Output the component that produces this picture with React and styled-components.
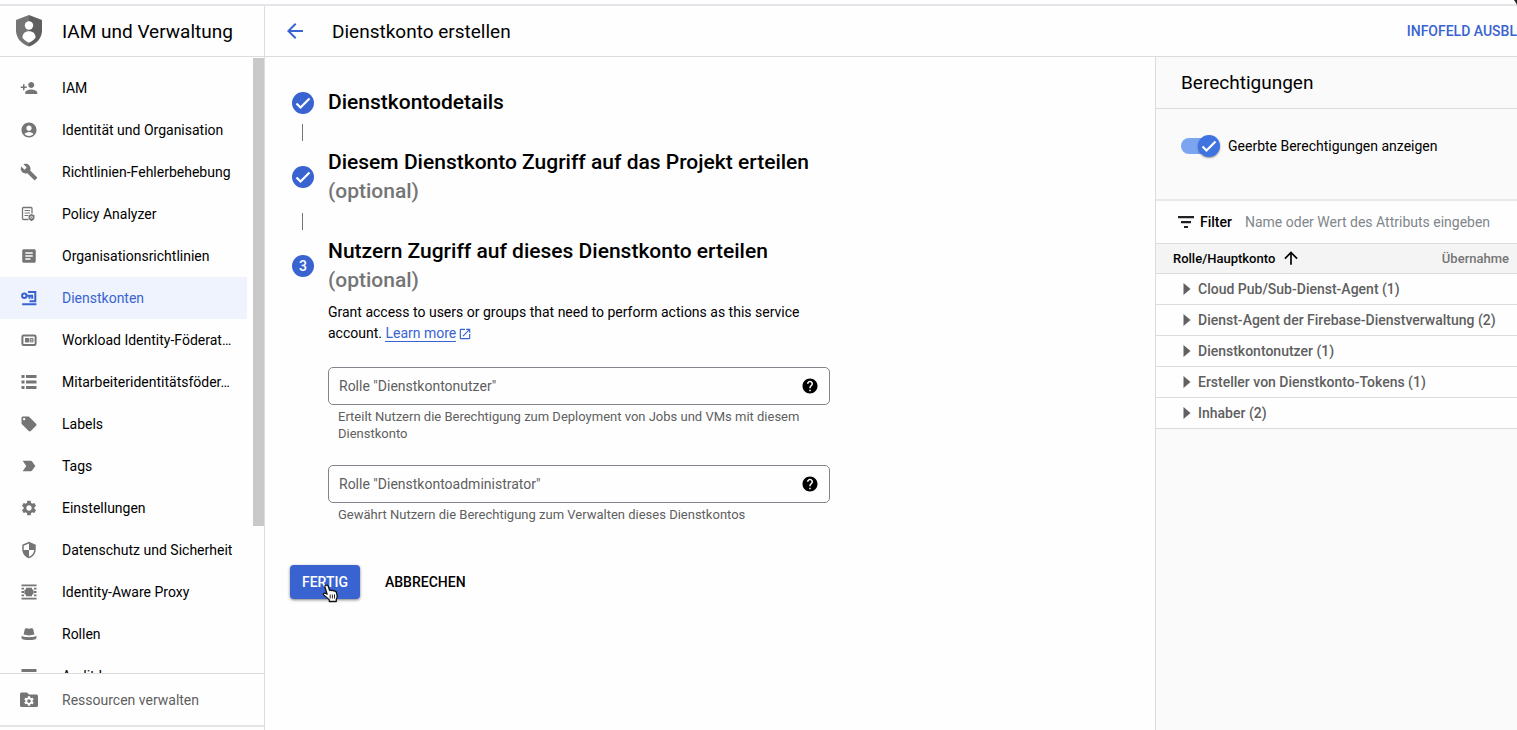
import React, { useState } from 'react'
import styled, { createGlobalStyle, css } from 'styled-components';
import {
  MdPersonAdd, MdAccountCircle, MdBuild, MdArticle, MdLocalOffer, MdLabelImportant,
  MdSettings, MdSecurity, MdArrowBack, MdArrowUpward, MdOpenInNew, MdHelp,
} from 'react-icons/md';

const BLUE = '#3963d1';
const LINE = '#dcdcde';
const GREY = '#757575';

const PolicyIcon = () => (
  <svg viewBox="0 0 18 18" fill="none" stroke="currentColor">
    <path d="M8.5 14.5H3.5a1 1 0 0 1-1-1V3.5a1 1 0 0 1 1-1H11a1 1 0 0 1 1 1V8.5" strokeWidth="1.3" />
    <path d="M4.5 5.5h5.5M4.5 8h5.5M4.5 10.5h3.5" />
    <path d="M11.5 9l3 1.2v2.4c0 1.8-1.3 3-3 3.6-1.7-.6-3-1.8-3-3.6v-2.4z" fill="currentColor" stroke="none" />
    <circle cx="11.5" cy="12.3" r="1" stroke="#fff" strokeWidth=".8" />
  </svg>
);

const ServiceAccountIcon = () => (
  <svg viewBox="0 0 18 18" fill="none" stroke="currentColor" strokeWidth="2">
    <circle cx="4.3" cy="6.7" r="2.2" />
    <path d="M6.5 6.7H13M9.5 6.7v3M12.2 6.7v3" />
    <path d="M8 3h7.3v9.3H9.5M2.2 15.2h14.2" />
  </svg>
);

const WorkloadIcon = () => (
  <svg viewBox="0 0 18 18" fill="none" stroke="currentColor">
    <rect x="2.4" y="4.4" width="13.2" height="9.6" rx="1.2" strokeWidth="2" />
    <path d="M5 7h4.2v4.4H5z" fill="currentColor" stroke="none" />
    <path d="M10.2 7.5h2.8v3.4h-2.8zM10 9.2h3" strokeWidth="1" />
  </svg>
);

const ListIcon = () => (
  <svg viewBox="0 0 18 18" fill="currentColor">
    <path d="M1.5 2h3v3h-3zM6 2h10.5v3H6zM1.5 7.5h3v3h-3zM6 7.5h10.5v3H6zM1.5 13h3v3h-3zM6 13h10.5v3H6z" />
  </svg>
);

const ProxyIcon = () => (
  <svg viewBox="0 0 18 18" fill="currentColor">
    <path d="M1.5 1.5h15v1.8h-15zM1.5 14.7h15v1.8h-15zM6 4.8h6v8.4H6zM4.5 6.5h9v5h-9z" />
    <path d="M1.5 4.7H4v1.7H1.5zM14 4.7h2.5v1.7H14zM1.5 8.1h2.8v1.8H1.5zM13.7 8.1h2.8v1.8h-2.8zM1.5 11.6H4v1.7H1.5zM14 11.6h2.5v1.7H14z" />
  </svg>
);

const HatIcon = () => (
  <svg viewBox="0 0 18 18" fill="currentColor">
    <path d="M3.6 9.6L4.7 4.6C5.1 3 6.8 2.8 9 3.7c2.2-.9 3.9-.7 4.3.9l1.1 5c-3.2 1.1-7.6 1.1-10.8 0z" />
    <path d="M1.5 11c4.5 1.6 10.5 1.6 15 0v1.5c0 1-.8 1.8-1.8 2-3.8.7-7.6.7-11.4 0-1-.2-1.8-1-1.8-2z" />
  </svg>
);

const LogsIcon = () => (
  <svg viewBox="0 0 18 18" fill="currentColor">
    <path d="M1.5 2h15v3h-15zM1.5 7h15v2h-15zM1.5 11h15v2h-15z" />
  </svg>
);

const FolderIcon = () => (
  <svg width="18" height="18" viewBox="0 0 18 18">
    <path fill={GREY} d="M1.5 1.5H7l2 2h7.5A1.5 1.5 0 0 1 18 5v9.5a1.5 1.5 0 0 1-1.5 1.5h-15A1.5 1.5 0 0 1 0 14.5V3a1.5 1.5 0 0 1 1.5-1.5z" />
    <MdSettings x="3" y="4" size={12} color="#fff" />
  </svg>
);

const ShieldLogo = () => (
  <svg width="26" height="32" viewBox="0 0 26 32">
    <path fill="#757575" d="M13 0L0 5v10.5C0 23 5.5 29 13 31.5z" />
    <path fill="#5f5f5f" d="M13 0l13 5v10.5C26 23 20.5 29 13 31.5z" />
    <circle cx="13" cy="10.5" r="4.2" fill="#fff" />
    <path fill="#fff" d="M6.5 22.5c0-4.2 2.7-6.3 6.5-6.3s6.5 2.1 6.5 6.3C18 25 15.8 26.6 13 27.7c-2.8-1.1-5-2.7-6.5-5.2z" />
  </svg>
);

const Check = () => (
  <svg width="16" height="16" viewBox="0 0 16 16" fill="none" stroke="#fff" strokeWidth="2.2">
    <path d="M1.5 8.5l4 4 9-9" />
  </svg>
);

const FilterIcon = () => (
  <svg width="16" height="12" viewBox="0 0 16 12" fill="#202124">
    <path d="M0 0h16v2.200H0zM3 5h10v2.200H3zM6 10h4v2H6z" />
  </svg>
);

const Triangle = () => (
  <svg width="8" height="12" viewBox="0 0 8 12"><path d="M.5 0l7 6-7 6z" fill="#616161" /></svg>
);

const HandCursor = () => (
  <Cursor width="17" height="19" viewBox="0 0 17 19" aria-hidden="true">
    <path
      d="M4 1.2c1-.4 1.9.1 2.2 1l1.5 4.3c.7-.7 1.7-.6 2.2.2.8-.6 1.8-.3 2.2.5.9-.4 1.9 0 2.2 1l.8 3.2c.3 1.5-.2 2.8-.8 4v2.1H7.3v-1.6C5.5 14.2 4 12.5 2 11.2c-1.4-1 0-2.7 1.6-1.9l1.5.9L2.900 3c-.2-.8.2-1.5 1.1-1.8z"
      fill="#fff" stroke="#111" strokeWidth="1.3" strokeLinejoin="round"
    />
    <path d="M8.2 10.5v4M10.4 10.5v4M12.5 10.5v4" stroke="#111" strokeWidth=".9" />
  </Cursor>
);

const navItems = [
  { label: 'IAM', icon: MdPersonAdd },
  { label: 'Identität und Organisation', icon: MdAccountCircle },
  { label: 'Richtlinien-Fehlerbehebung', icon: MdBuild },
  { label: 'Policy Analyzer', icon: PolicyIcon },
  { label: 'Organisationsrichtlinien', icon: MdArticle },
  { label: 'Dienstkonten', icon: ServiceAccountIcon },
  { label: 'Workload Identity-Föderat…', icon: WorkloadIcon },
  { label: 'Mitarbeiteridentitätsföder…', icon: ListIcon },
  { label: 'Labels', icon: MdLocalOffer },
  { label: 'Tags', icon: MdLabelImportant },
  { label: 'Einstellungen', icon: MdSettings },
  { label: 'Datenschutz und Sicherheit', icon: MdSecurity },
  { label: 'Identity-Aware Proxy', icon: ProxyIcon },
  { label: 'Rollen', icon: HatIcon },
  { label: 'Audit-Logs', icon: LogsIcon },
];

const roles = [
  'Cloud Pub/Sub-Dienst-Agent (1)',
  'Dienst-Agent der Firebase-Dienstverwaltung (2)',
  'Dienstkontonutzer (1)',
  'Ersteller von Dienstkonto-Tokens (1)',
  'Inhaber (2)',
];

const RoleField = ({ id, label, hint }) => {
  const [value, setValue] = useState('');
  return (
    <Field>
      <FieldBox>
        <FieldInput
          type='text'
          id={id}
          aria-label={label}
          aria-describedby={`${id}-hint`}
          placeholder={label}
          value={value}
          onChange={e => setValue(e.target.value)}
        />
        <HelpButton type='button' aria-label='Hilfe'><MdHelp size={18} /></HelpButton>
      </FieldBox>
      <Hint id={`${id}-hint`}>{hint}</Hint>
    </Field>
  );
};

export default function App() {
  const [inherited, setInherited] = useState(true);
  const [filter, setFilter] = useState('');

  return (
    <>
      <GlobalStyle />
      <Page>
        <TopStrip>
          <svg width="3" height="5" viewBox="0 0 3 5"><path d="M0 0h3v5L2 3z" fill="#222" /></svg>
        </TopStrip>
        <Shell>
          <Sidebar>
            <SidebarHeader>
              <ShieldLogo />
              <Title>IAM und Verwaltung</Title>
            </SidebarHeader>
            <NavScroll>
              <NavList>
                {navItems.map(({ label, icon: Icon }) => (
                  <li key={label}>
                    <NavLink href="#" $active={label === 'Dienstkonten'}>
                      <Icon />
                      {label}
                    </NavLink>
                  </li>
                ))}
              </NavList>
              <ScrollThumb />
            </NavScroll>
            <ResourceLink href="#">
              <FolderIcon />
              Ressourcen verwalten
            </ResourceLink>
            <SidebarEnd />
          </Sidebar>

          <Workspace>
            <Toolbar>
              <BackButton type='button' aria-label='Zurück'><MdArrowBack size={24} /></BackButton>
              <Title>Dienstkonto erstellen</Title>
              <InfoButton type='button'>INFOFELD AUSBL</InfoButton>
            </Toolbar>
            <Columns>
              <Main>
                <Step>
                  <Badge><Check /></Badge>
                  <StepTitle>Dienstkontodetails</StepTitle>
                </Step>
                <Connector />
                <Step>
                  <Badge><Check /></Badge>
                  <StepTitle>
                    Diesem Dienstkonto Zugriff auf das Projekt erteilen
                    <Optional>(optional)</Optional>
                  </StepTitle>
                </Step>
                <Connector />
                <Step>
                  <Badge>3</Badge>
                  <StepTitle>
                    Nutzern Zugriff auf dieses Dienstkonto erteilen
                    <Optional>(optional)</Optional>
                  </StepTitle>
                </Step>
                <StepBody>
                  <Description>
                    Grant access to users or groups that need to perform actions as this service
                    account. <LearnMore href="#">Learn more</LearnMore><MdOpenInNew size={14} color={BLUE} />
                  </Description>
                  <RoleField
                    id='rolle-nutzer'
                    label='Rolle "Dienstkontonutzer"'
                    hint='Erteilt Nutzern die Berechtigung zum Deployment von Jobs und VMs mit diesem Dienstkonto'
                  />
                  <RoleField
                    id='rolle-admin'
                    label='Rolle "Dienstkontoadministrator"'
                    hint='Gewährt Nutzern die Berechtigung zum Verwalten dieses Dienstkontos'
                  />
                </StepBody>
                <Actions>
                  <ActionButton type='button' $primary>FERTIG<HandCursor /></ActionButton>
                  <ActionButton type='button'>ABBRECHEN</ActionButton>
                </Actions>
              </Main>

              <InfoPanel>
                <PanelHeader><Title as='h2'>Berechtigungen</Title></PanelHeader>
                <SwitchRow>
                  <Switch>
                    <input
                      type='checkbox'
                      id='inherited'
                      checked={inherited}
                      onChange={e => setInherited(e.target.checked)}
                    />
                    <Knob $on={inherited}><Check /></Knob>
                  </Switch>
                  <label htmlFor='inherited'>Geerbte Berechtigungen anzeigen</label>
                </SwitchRow>
                <FilterRow>
                  <FilterIcon />
                  <label htmlFor='filter'>Filter</label>
                  <FilterInput
                    type='text'
                    id='filter'
                    placeholder='Name oder Wert des Attributs eingeben'
                    value={filter}
                    onChange={e => setFilter(e.target.value)}
                  />
                </FilterRow>
                <RoleTable>
                  <thead>
                    <tr>
                      <th><HeadCell>Rolle/Hauptkonto <MdArrowUpward size={20} /></HeadCell></th>
                      <th>Übernahme</th>
                    </tr>
                  </thead>
                  <tbody>
                    {roles.map(role => (
                      <tr key={role}>
                        <td colSpan={2}><RoleCell><Triangle />{role}</RoleCell></td>
                      </tr>
                    ))}
                  </tbody>
                </RoleTable>
              </InfoPanel>
            </Columns>
          </Workspace>
        </Shell>
      </Page>
    </>
  )
}

const GlobalStyle = createGlobalStyle`
  * {
    box-sizing: border-box;
  }

  body {
    margin: 0;
    background: #fefefe;
    color: #000;
    font-family: Roboto, "Liberation Sans", sans-serif;
    font-size: 14px;
    overflow: hidden;
  }

  button, input {
    font: inherit;
    color: inherit;
    border: none;
    background: none;
    padding: 0;
  }

  button {
    cursor: pointer;
  }

  svg {
    flex-shrink: 0;
  }
`;

const Page = styled.div`
  display: flex;
  flex-direction: column;
  height: 100vh;
`;

const TopStrip = styled.div`
  display: flex;
  justify-content: flex-end;
  height: 6px;
  border-bottom: 2px solid #e4e4e9;
`;

const Shell = styled.div`
  display: flex;
  flex: 1;
  min-height: 0;
`;

const Sidebar = styled.nav`
  display: flex;
  flex-direction: column;
  width: 265px;
  border-right: 1px solid ${LINE};
`;

const headerBar = css`
  display: flex;
  align-items: center;
  flex-shrink: 0;
  height: 51px;
  border-bottom: 1px solid ${LINE};
`;

const SidebarHeader = styled.div`
  ${headerBar}
  gap: 20px;
  padding-left: 16px;
`;

const Title = styled.h1`
  margin: 0;
  font-size: 19px;
  font-weight: 400;
`;

const NavScroll = styled.div`
  display: flex;
  flex: 1;
  gap: 6px;
  min-height: 0;
  overflow: hidden;
`;

const NavList = styled.ul`
  flex: 1;
  margin: 0;
  padding: 10px 0 0;
  list-style: none;
`;

const NavLink = styled.a`
  display: flex;
  align-items: center;
  gap: 24px;
  height: 42px;
  padding-left: 20px;
  white-space: nowrap;
  text-decoration: none;
  color: ${props => (props.$active ? BLUE : '#000')};
  background: ${props => (props.$active ? '#eef3fd' : 'transparent')};

  svg {
    width: 18px;
    height: 18px;
    color: ${props => (props.$active ? BLUE : GREY)};
  }
`;

const ScrollThumb = styled.div`
  width: 11px;
  height: 76%;
  margin-top: 1px;
  background: #c9c9c9;
`;

const ResourceLink = styled.a`
  display: flex;
  align-items: center;
  gap: 24px;
  height: 52px;
  padding-left: 20px;
  border-top: 1px solid ${LINE};
  color: #5f5f5f;
  text-decoration: none;
`;

const SidebarEnd = styled.div`
  height: 5px;
  border-top: 2px solid #e4e4e6;
`;

const Workspace = styled.div`
  display: flex;
  flex: 1;
  flex-direction: column;
  min-width: 0;
`;

const Toolbar = styled.header`
  ${headerBar}
  gap: 25px;
  padding-left: 18px;
`;

const BackButton = styled.button`
  display: flex;
  color: ${BLUE};
`;

const InfoButton = styled.button`
  margin-left: auto;
  color: ${BLUE};
  font-weight: 500;
  white-space: nowrap;
`;

const Columns = styled.div`
  display: flex;
  flex: 1;
  min-height: 0;
`;

const Main = styled.main`
  flex: 1;
  padding: 31px 25px;
`;

const Step = styled.div`
  display: flex;
  align-items: center;
  gap: 14px;
  padding-left: 2px;
`;

const Badge = styled.span`
  display: flex;
  align-items: center;
  justify-content: center;
  width: 22px;
  height: 22px;
  border-radius: 50%;
  background: ${BLUE};
  color: #fff;
  font-weight: 500;
`;

const StepTitle = styled.h2`
  margin: 0;
  font-size: 21px;
  font-weight: 500;
  line-height: 29px;
`;

const Optional = styled.span`
  display: block;
  color: #757575;
`;

const Connector = styled.div`
  width: 1px;
  height: 17px;
  margin: 7px 12px;
  background: #757575;
`;

const StepBody = styled.div`
  max-width: 540px;
  padding-left: 38px;
`;

const Description = styled.p`
  margin: 7px 0 0;
  padding-right: 20px;
  line-height: 21px;

  svg {
    margin-left: 2px;
    vertical-align: middle;
  }
`;

const LearnMore = styled.a`
  color: ${BLUE};
  text-decoration: none;
  border-bottom: 1px solid ${BLUE};
`;

const Field = styled.div`
  margin-top: 23px;
`;

const FieldBox = styled.div`
  display: flex;
  align-items: center;
  height: 38px;
  padding: 0 10px;
  border: 1px solid #80868b;
  border-radius: 5px;
`;

const FieldInput = styled.input`
  flex: 1;
  outline: none;

  &::placeholder {
    color: #5f5f5f;
    opacity: 1;
  }
`;

const HelpButton = styled.button`
  display: flex;
`;

const Hint = styled.p`
  margin: 3px 10px 0;
  color: #5f5f5f;
  font-size: 13px;
  line-height: 17px;
`;

const Actions = styled.div`
  display: flex;
  gap: 13px;
  margin-top: 42px;
`;

const ActionButton = styled.button`
  position: relative;
  height: 34px;
  padding: 0 12px;
  border-radius: 4px;
  font-weight: 500;
  color: ${props => (props.$primary ? '#fff' : '#000')};
  background: ${props => (props.$primary ? BLUE : 'transparent')};
  box-shadow: ${props => (props.$primary ? '0 1px 3px rgba(0, 0, 0, 0.5)' : 'none')};
`;

const Cursor = styled.svg`
  position: absolute;
  left: 32px;
  top: 19px;
`;

const InfoPanel = styled.aside`
  width: 362px;
  border-left: 1px solid ${LINE};
  background: #fafafa;
`;

const PanelHeader = styled.div`
  display: flex;
  align-items: center;
  height: 52px;
  padding-left: 25px;
  border-bottom: 1px solid ${LINE};
`;

const SwitchRow = styled.div`
  display: flex;
  align-items: center;
  gap: 8px;
  height: 92px;
  padding: 0 25px 16px;
  border-bottom: 2px solid #e8e8e8;
`;

const Switch = styled.span`
  position: relative;
  display: flex;
  width: 39px;

  input {
    appearance: none;
    width: 36px;
    height: 16px;
    margin: 0;
    border-radius: 8px;
    background: #7ba4f1;
    cursor: pointer;
  }
`;

const Knob = styled.span`
  position: absolute;
  top: -3px;
  right: ${props => (props.$on ? '0' : '18px')};
  display: flex;
  align-items: center;
  justify-content: center;
  width: 22px;
  height: 22px;
  border-radius: 50%;
  background: #3f74e0;
  color: #fff;
  box-shadow: 0 1px 2px rgba(0, 0, 0, 0.4);
  pointer-events: none;
`;

const FilterRow = styled.div`
  display: flex;
  align-items: center;
  height: 43px;
  padding-left: 22px;
  border-bottom: 1px solid ${LINE};
  background: #fefefe;

  label {
    margin: 0 13px 0 6px;
    font-weight: 500;
  }
`;

const FilterInput = styled.input`
  flex: 1;
  outline: none;

  &::placeholder {
    color: #80868b;
    opacity: 1;
  }
`;

const RoleTable = styled.table`
  width: 100%;
  border-collapse: collapse;
  background: #fefefe;

  tr {
    height: 31px;
    border-bottom: 1px solid ${LINE};
  }

  thead tr {
    height: 29px;
    background: #f4f4f4;
  }

  th {
    padding: 0 8px 0 17px;
    font-size: 13px;
    font-weight: 500;
    text-align: left;
  }

  th:last-child {
    color: #757575;
    text-align: right;
  }

  td {
    padding: 0 0 0 27px;
    color: #5f5f5f;
    font-weight: 500;
  }
`;

const HeadCell = styled.span`
  display: flex;
  align-items: center;
  gap: 6px;
`;

const RoleCell = styled.span`
  display: flex;
  align-items: center;
  gap: 7px;
  white-space: nowrap;
`;
